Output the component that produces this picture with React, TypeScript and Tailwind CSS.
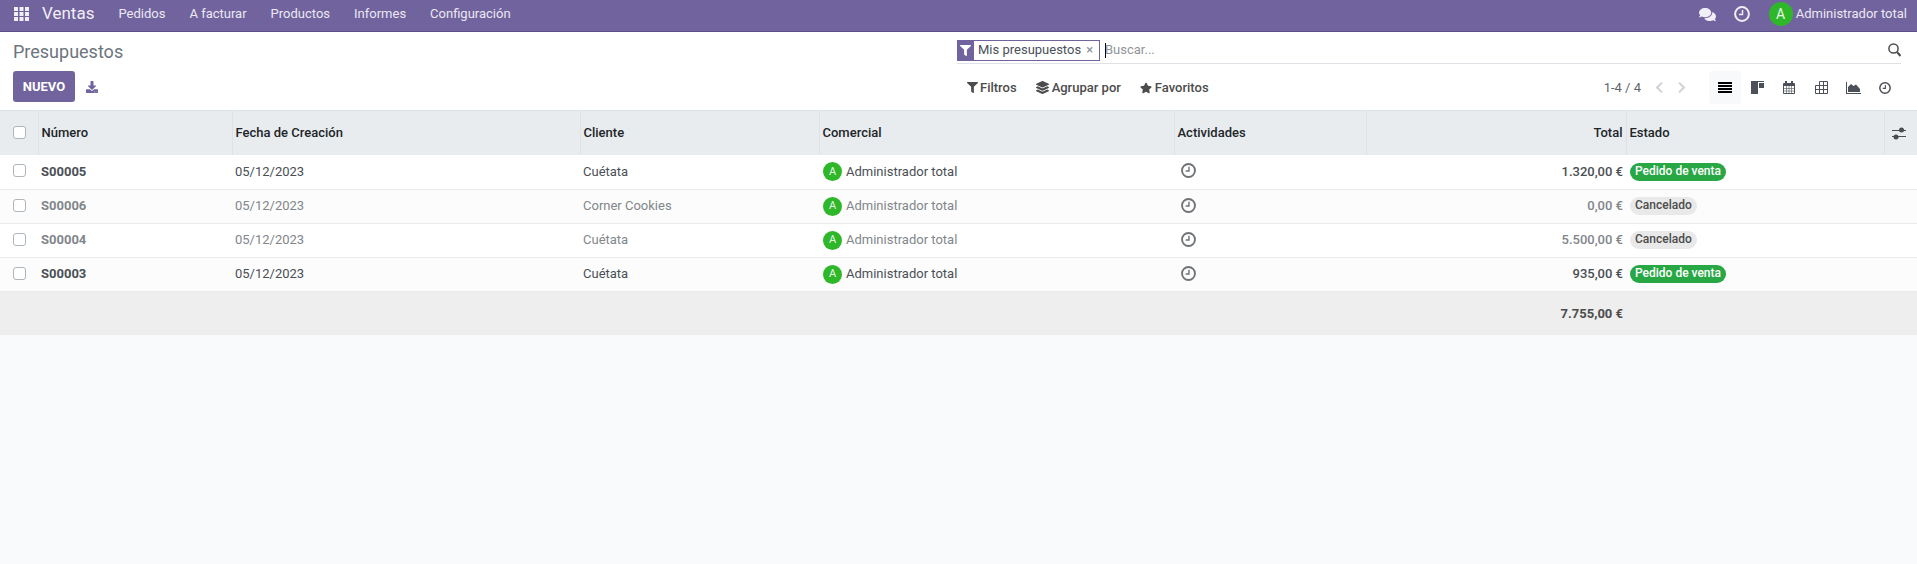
import React from 'react';
import { FaComments, FaFilter, FaLayerGroup, FaStar, FaDownload } from 'react-icons/fa';

const navLinks = ['Pedidos', 'A facturar', 'Productos', 'Informes', 'Configuración'];

const rows = [
  { num: 'S00005', client: 'Cuétata', total: '1.320,00 €', state: 'Pedido de venta', muted: false },
  { num: 'S00006', client: 'Corner Cookies', total: '0,00 €', state: 'Cancelado', muted: true },
  { num: 'S00004', client: 'Cuétata', total: '5.500,00 €', state: 'Cancelado', muted: true },
  { num: 'S00003', client: 'Cuétata', total: '935,00 €', state: 'Pedido de venta', muted: false },
];

const ClockIcon = ({ className }: { className: string }) => (
  <svg viewBox="0 0 16 16" className={className} fill="none" stroke="currentColor">
    <circle cx="8" cy="8" r="6.9" strokeWidth="2" />
    <path d="M8.5 4v4.500H5" strokeWidth="1.500" />
  </svg>
);

const Checkbox = () => (
  <span className="block w-[13px] h-[13px] ml-[13px] -mt-[2px] rounded-[3px] border border-[#adb5bd] bg-white" />
);

const Th = ({ children, className = '' }: { children?: React.ReactNode; className?: string }) => (
  <th className={`h-[44px] px-[3px] pb-[1px] font-medium text-[#212529] border-r border-[#dee2e6] text-left ${className}`}>{children}</th>
);

const ViewButton = ({ children, active = false }: { children: React.ReactNode; active?: boolean }) => (
  <span className={`w-8 h-[33px] rounded-[3px] flex items-center justify-center ${active ? 'bg-[#f8f9fa]' : ''}`}>{children}</span>
);

export default function App() {
  return (
    <div className="min-h-[564px] bg-[#f9fafb] text-[13px] text-[#4c4c4c] font-['Roboto',sans-serif]">
      {/* Navbar */}
      <nav className="h-8 bg-[#71639e] border-b border-[#5d4f8a] flex items-center text-white pb-[3px]">
        <svg viewBox="0 0 15 14" className="w-[15px] h-[14px] ml-[14px] text-[#f0eef6]" fill="currentColor">
          <path d="M0 0h4v4H0zM5.500 0h4v4h-4zM11 0h4v4h-4zM0 5h4v4H0zM5.500 5h4v4h-4zM11 5h4v4h-4zM0 10h4v4H0zM5.500 10h4v4h-4zM11 10h4v4h-4z" />
        </svg>
        <span className="ml-[13px] text-[17px] text-[#f0eef6]">Ventas</span>
        <div className="flex gap-[24px] ml-[24px] text-[#ebe8f2]">
          {navLinks.map((link) => (
            <span key={link}>{link}</span>
          ))}
        </div>
        <div className="ml-auto flex items-center pr-[10px]">
          <FaComments size={17} className="text-[#f0eef6]" />
          <ClockIcon className="w-4 h-4 ml-[18px] text-[#f0eef6]" />
          <span className="ml-[19px] w-6 h-6 rounded-full bg-[#2fb72a] flex items-center justify-center text-[14px] text-[#e8f5e8]">A</span>
          <span className="ml-[3px] text-[#ebe8f2]">Administrador total</span>
        </div>
      </nav>

      {/* Control panel */}
      <div className="h-[79px] bg-white border-b border-[#dee2e6] flex">
        <div className="w-[957px] pl-[13px] shrink-0">
          <div className="text-[18px] leading-[22px] text-[#6c757d] mt-[9px]">Presupuestos</div>
          <div className="flex items-center mt-[8px]">
            <button className="h-[31px] w-[62px] rounded-[3px] bg-[#71639e] text-white font-bold text-[13px]">NUEVO</button>
            <FaDownload size={12} className="ml-[11px] text-[#71639e]" />
          </div>
        </div>
        <div className="flex-1 pr-4">
          <div className="mt-[6px] h-[26px] border-b border-[#dee2e6] flex items-center pb-[1px]">
            <span className="w-4 h-[21px] bg-[#71639e] flex items-center justify-center">
              <FaFilter size={11} className="text-white" />
            </span>
            <span className="h-[21px] w-[127px] border border-[#71639e] flex items-center pl-[4px] text-[#495057]">
              Mis presupuestos
              <span className="ml-[5px] text-[#8a8f94] text-[13px]">×</span>
            </span>
            <span className="ml-[5px] border-l border-black h-[15px] flex items-center text-[#8f959a]">
              <span className="-ml-px">Buscar...</span>
            </span>
            <svg viewBox="0 0 13 14" className="ml-auto w-[13px] h-[14px] text-[#4c4c4c]" fill="none" stroke="currentColor">
              <circle cx="5.500" cy="5.500" r="4.600" strokeWidth="1.500" />
              <path d="m9 9 3.500 4" strokeWidth="2" />
            </svg>
          </div>
          <div className="flex items-center mt-[7px] h-[33px]">
            <div className="flex items-center font-medium text-[#4c4c4c]">
              <FaFilter size={11} className="ml-[10px]" />
              <span className="ml-[2px]">Filtros</span>
              <FaLayerGroup size={13} className="ml-[19px]" />
              <span className="ml-[3px]">Agrupar por</span>
              <FaStar size={12} className="ml-[19px]" />
              <span className="ml-[3px]">Favoritos</span>
            </div>
            <div className="ml-auto flex items-center">
              <span className="text-[#5f6468]">1-4 / 4</span>
              <svg viewBox="0 0 10 16" className="w-[9px] h-[13px] ml-[14px] text-[#ced4da]" fill="none" stroke="currentColor" strokeWidth="2.600"><path d="M8 2 2 8l6 6" /></svg>
              <svg viewBox="0 0 10 16" className="w-[9px] h-[13px] ml-[13px] text-[#ced4da]" fill="none" stroke="currentColor" strokeWidth="2.600"><path d="m2 2 6 6-6 6" /></svg>
              <div className="ml-[23px] flex items-center text-[#4c5058]">
                <ViewButton active>
                  <span className="w-[14px] flex flex-col gap-[1px]">
                    <i className="block h-[2px] bg-black" />
                    <i className="block h-[2px] bg-black" />
                    <i className="block h-[2px] bg-black" />
                    <i className="block h-[2px] bg-black" />
                  </span>
                </ViewButton>
                <ViewButton>
                  <svg viewBox="0 0 13 13" className="w-[13px] h-[13px]" fill="currentColor"><path d="M0 0h13v1H0zM0 1h7v12H0zM8 2h5v5H8z" /></svg>
                </ViewButton>
                <ViewButton>
                  <svg viewBox="0 0 12 13" className="w-3 h-[13px]" fill="none" stroke="currentColor">
                    <path d="M.5 2.500h11v10H.5z" />
                    <path d="M.5 4h11" strokeWidth="2" />
                    <path d="M.5 7.500h11M.5 10h11M3.500 5v7M6 5v7M8.500 5v7" strokeWidth=".6" />
                    <path d="M3 0v3M9 0v3" strokeWidth="2" />
                  </svg>
                </ViewButton>
                <ViewButton>
                  <svg viewBox="0 0 13 13" className="w-[13px] h-[13px]" fill="none" stroke="currentColor"><path d="M4.500.500h8v12H.5v-8h12M.5 8.500h12M4.500.500v12M8.500.500v12" /></svg>
                </ViewButton>
                <ViewButton>
                  <svg viewBox="0 0 15 12" className="w-[15px] h-3" fill="currentColor"><path d="M0 0h1v11h14v1H0z" /><path d="M2 10V5l3-3 2.500 2L10 2.500 14 7v3z" /></svg>
                </ViewButton>
                <ViewButton>
                  <ClockIcon className="w-3 h-3" />
                </ViewButton>
              </div>
            </div>
          </div>
        </div>
      </div>

      {/* List */}
      <table className="w-full table-fixed border-collapse">
        <colgroup>
          <col className="w-[38px]" />
          <col className="w-[194px]" />
          <col className="w-[348px]" />
          <col className="w-[239px]" />
          <col className="w-[355px]" />
          <col className="w-[192px]" />
          <col className="w-[260px]" />
          <col className="w-[258px]" />
          <col />
        </colgroup>
        <thead>
          <tr className="bg-[#e9ecef]">
            <th className="h-[44px] border-r border-[#dee2e6]"><Checkbox /></th>
            <Th>Número</Th>
            <Th>Fecha de Creación</Th>
            <Th>Cliente</Th>
            <Th>Comercial</Th>
            <Th>Actividades</Th>
            <Th className="text-right">Total</Th>
            <Th>Estado</Th>
            <th className="px-[3px]">
              <svg viewBox="0 0 14 13" className="w-[14px] h-[13px] ml-1 text-[#4c4c4c]" fill="currentColor">
                <path d="M0 3h14v1H0zM0 9h14v1H0z" />
                <circle cx="9.500" cy="3" r="2.500" />
                <circle cx="4" cy="10" r="2.500" />
              </svg>
            </th>
          </tr>
        </thead>
        <tbody>
          {rows.map((row, i) => (
            <tr
              key={row.num}
              className={`h-[34px] border-b border-[#e9ecef] ${i % 2 ? 'bg-[#fcfcfc]' : 'bg-white'} ${row.muted ? 'text-[#82868b]' : 'text-[#4a4f55]'}`}
            >
              <td><Checkbox /></td>
              <td className="px-[3px] font-bold">{row.num}</td>
              <td className="px-[3px]">05/12/2023</td>
              <td className="px-[3px]">{row.client}</td>
              <td className="px-[3px]">
                <div className="flex items-center">
                  <span className="ml-[1px] w-[19px] h-[19px] rounded-full bg-[#2fb72a] flex items-center justify-center text-[11px] text-[#e8f5e8]">A</span>
                  <span className="ml-1">Administrador total</span>
                </div>
              </td>
              <td className="px-[3px]"><ClockIcon className="w-[15px] h-[15px] ml-1 -mt-[2px] text-[#6f7378]" /></td>
              <td className="px-[3px] text-right font-medium">{row.total}</td>
              <td className="px-[3px]">
                {row.state === 'Cancelado' ? (
                  <span className="inline-block ml-[1px] h-[18px] leading-[17px] px-[5px] rounded-full bg-[#e9e9e9] text-[#4c4c4c] font-medium text-[12px] align-[1px]">{row.state}</span>
                ) : (
                  <span className="inline-block ml-[1px] h-[18px] leading-[17px] px-[5px] rounded-full bg-[#28a745] text-white font-medium text-[12px] align-[1px]">{row.state}</span>
                )}
              </td>
              <td />
            </tr>
          ))}
        </tbody>
        <tfoot>
          <tr className="h-[44px] bg-[#eeeeee]">
            <td colSpan={6} />
            <td className="px-[3px] text-right font-bold text-[#4c4c4c]">7.755,00 €</td>
            <td colSpan={2} />
          </tr>
        </tfoot>
      </table>
    </div>
  );
}
